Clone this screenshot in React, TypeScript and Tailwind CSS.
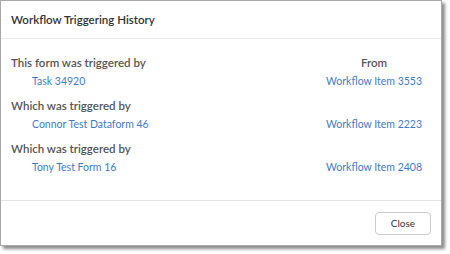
import React from 'react';

type Step = { label: string; source: string; from: string };

const steps: Step[] = [
  { label: 'This form was triggered by', source: 'Task 34920', from: 'Workflow Item 3553' },
  { label: 'Which was triggered by', source: 'Connor Test Dataform 46', from: 'Workflow Item 2223' },
  { label: 'Which was triggered by', source: 'Tony Test Form 16', from: 'Workflow Item 2408' },
];

export default function App() {
  return (
    <div className="w-[450px] h-[254px] bg-white" style={{ fontFamily: 'Lato, "Open Sans", sans-serif' }}>
      {/* Diálogo */}
      <div className="w-[442px] h-[246px] bg-white border border-[#a9a9a9] shadow-[3px_3px_3px_rgba(0,0,0,0.45)] flex flex-col">
        {/* Cabecera */}
        <div className="h-[38px] shrink-0 flex items-center px-[10px] border-b border-[#e8e8e8]">
          <h2 className="text-[11.5px] font-semibold text-[#333]">Workflow Triggering History</h2>
        </div>

        {/* Cuerpo: cadena de disparos */}
        <div className="flex-1 pt-[14px] pl-[10px] pr-[19px] grid grid-cols-[1fr_auto] content-start leading-[19px]">
          {steps.map((s, i) => (
            <React.Fragment key={i}>
              <p className={`text-[11.5px] font-semibold text-[#555] ${i > 0 ? 'mt-[5px]' : ''}`}>{s.label}</p>
              <p className={`text-[11.5px] font-semibold text-[#555] text-center ${i > 0 ? 'mt-[5px]' : ''}`}>{i === 0 ? 'From' : ''}</p>
              <a className="pl-[21px] text-[10.5px] text-[#3f7bc4]">{s.source}</a>
              <a className="text-[10.5px] text-[#3f7bc4] text-center">{s.from}</a>
            </React.Fragment>
          ))}
        </div>

        {/* Pie */}
        <div className="h-[45px] shrink-0 border-t border-[#e5e5e5] flex items-center justify-end pr-[10px]">
          <button className="w-[56px] h-[23px] rounded-[4px] border border-[#ccc] bg-white text-[10px] text-[#333]">
            Close
          </button>
        </div>
      </div>
    </div>
  );
}
